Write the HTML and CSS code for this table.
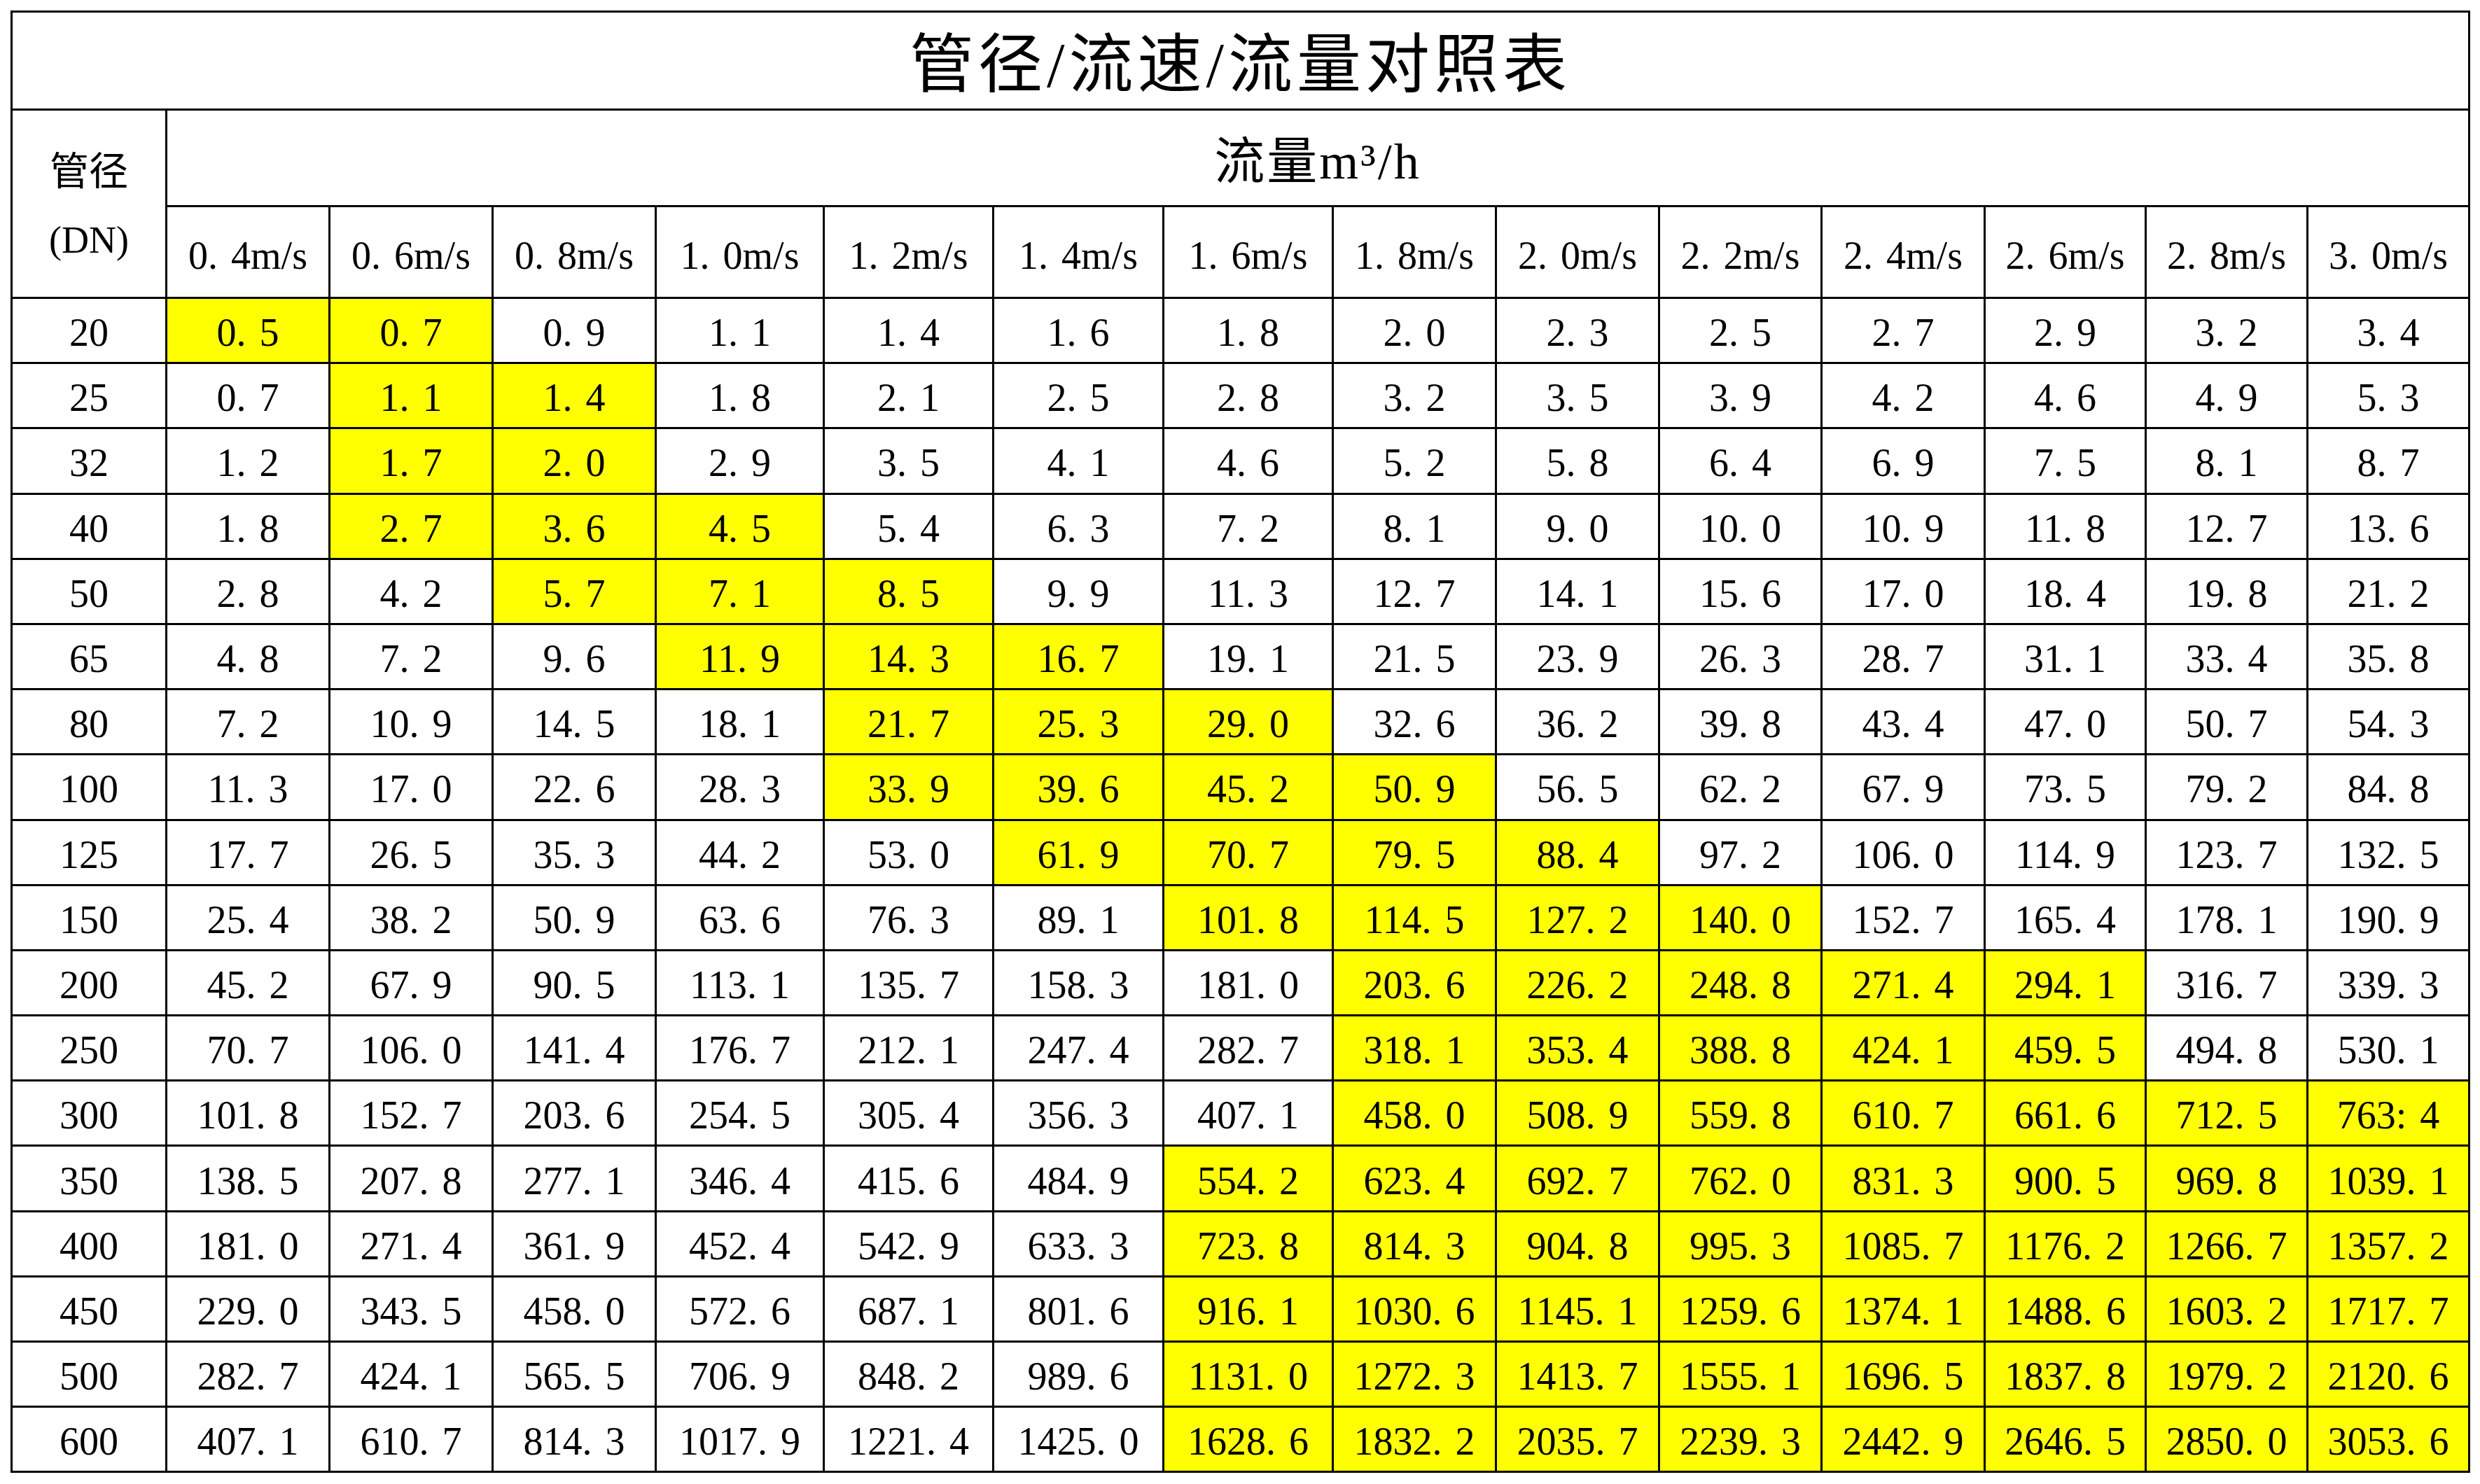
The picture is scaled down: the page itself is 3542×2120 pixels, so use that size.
FILE: index.html
```html
<!DOCTYPE html>
<html lang="zh-CN">
<head>
<meta charset="utf-8">
<title>管径/流速/流量对照表</title>
<link rel="stylesheet" href="styles.css">
</head>
<body>
<table class="chart">
<colgroup>
<col><col><col><col><col><col><col><col><col><col><col><col><col><col><col>
</colgroup>
<tr class="r-title"><th colspan="15" class="title">管径/流速/流量对照表</th></tr>
<tr class="r-unit"><th rowspan="2" class="dn"><span class="dn-a">管径</span><br><span class="dn-b">(DN)</span></th><th colspan="14" class="unit">流量m³/h</th></tr>
<tr class="r-speed">
<th>0<span class="p">.</span>4m/s</th><th>0<span class="p">.</span>6m/s</th><th>0<span class="p">.</span>8m/s</th><th>1<span class="p">.</span>0m/s</th><th>1<span class="p">.</span>2m/s</th><th>1<span class="p">.</span>4m/s</th><th>1<span class="p">.</span>6m/s</th><th>1<span class="p">.</span>8m/s</th><th>2<span class="p">.</span>0m/s</th><th>2<span class="p">.</span>2m/s</th><th>2<span class="p">.</span>4m/s</th><th>2<span class="p">.</span>6m/s</th><th>2<span class="p">.</span>8m/s</th><th>3<span class="p">.</span>0m/s</th>
</tr>
<tr class="r-data"><th>20</th><td class="y">0<span class="p">.</span>5</td><td class="y">0<span class="p">.</span>7</td><td>0<span class="p">.</span>9</td><td>1<span class="p">.</span>1</td><td>1<span class="p">.</span>4</td><td>1<span class="p">.</span>6</td><td>1<span class="p">.</span>8</td><td>2<span class="p">.</span>0</td><td>2<span class="p">.</span>3</td><td>2<span class="p">.</span>5</td><td>2<span class="p">.</span>7</td><td>2<span class="p">.</span>9</td><td>3<span class="p">.</span>2</td><td>3<span class="p">.</span>4</td></tr>
<tr class="r-data"><th>25</th><td>0<span class="p">.</span>7</td><td class="y">1<span class="p">.</span>1</td><td class="y">1<span class="p">.</span>4</td><td>1<span class="p">.</span>8</td><td>2<span class="p">.</span>1</td><td>2<span class="p">.</span>5</td><td>2<span class="p">.</span>8</td><td>3<span class="p">.</span>2</td><td>3<span class="p">.</span>5</td><td>3<span class="p">.</span>9</td><td>4<span class="p">.</span>2</td><td>4<span class="p">.</span>6</td><td>4<span class="p">.</span>9</td><td>5<span class="p">.</span>3</td></tr>
<tr class="r-data"><th>32</th><td>1<span class="p">.</span>2</td><td class="y">1<span class="p">.</span>7</td><td class="y">2<span class="p">.</span>0</td><td>2<span class="p">.</span>9</td><td>3<span class="p">.</span>5</td><td>4<span class="p">.</span>1</td><td>4<span class="p">.</span>6</td><td>5<span class="p">.</span>2</td><td>5<span class="p">.</span>8</td><td>6<span class="p">.</span>4</td><td>6<span class="p">.</span>9</td><td>7<span class="p">.</span>5</td><td>8<span class="p">.</span>1</td><td>8<span class="p">.</span>7</td></tr>
<tr class="r-data"><th>40</th><td>1<span class="p">.</span>8</td><td class="y">2<span class="p">.</span>7</td><td class="y">3<span class="p">.</span>6</td><td class="y">4<span class="p">.</span>5</td><td>5<span class="p">.</span>4</td><td>6<span class="p">.</span>3</td><td>7<span class="p">.</span>2</td><td>8<span class="p">.</span>1</td><td>9<span class="p">.</span>0</td><td>10<span class="p">.</span>0</td><td>10<span class="p">.</span>9</td><td>11<span class="p">.</span>8</td><td>12<span class="p">.</span>7</td><td>13<span class="p">.</span>6</td></tr>
<tr class="r-data"><th>50</th><td>2<span class="p">.</span>8</td><td>4<span class="p">.</span>2</td><td class="y">5<span class="p">.</span>7</td><td class="y">7<span class="p">.</span>1</td><td class="y">8<span class="p">.</span>5</td><td>9<span class="p">.</span>9</td><td>11<span class="p">.</span>3</td><td>12<span class="p">.</span>7</td><td>14<span class="p">.</span>1</td><td>15<span class="p">.</span>6</td><td>17<span class="p">.</span>0</td><td>18<span class="p">.</span>4</td><td>19<span class="p">.</span>8</td><td>21<span class="p">.</span>2</td></tr>
<tr class="r-data"><th>65</th><td>4<span class="p">.</span>8</td><td>7<span class="p">.</span>2</td><td>9<span class="p">.</span>6</td><td class="y">11<span class="p">.</span>9</td><td class="y">14<span class="p">.</span>3</td><td class="y">16<span class="p">.</span>7</td><td>19<span class="p">.</span>1</td><td>21<span class="p">.</span>5</td><td>23<span class="p">.</span>9</td><td>26<span class="p">.</span>3</td><td>28<span class="p">.</span>7</td><td>31<span class="p">.</span>1</td><td>33<span class="p">.</span>4</td><td>35<span class="p">.</span>8</td></tr>
<tr class="r-data"><th>80</th><td>7<span class="p">.</span>2</td><td>10<span class="p">.</span>9</td><td>14<span class="p">.</span>5</td><td>18<span class="p">.</span>1</td><td class="y">21<span class="p">.</span>7</td><td class="y">25<span class="p">.</span>3</td><td class="y">29<span class="p">.</span>0</td><td>32<span class="p">.</span>6</td><td>36<span class="p">.</span>2</td><td>39<span class="p">.</span>8</td><td>43<span class="p">.</span>4</td><td>47<span class="p">.</span>0</td><td>50<span class="p">.</span>7</td><td>54<span class="p">.</span>3</td></tr>
<tr class="r-data"><th>100</th><td>11<span class="p">.</span>3</td><td>17<span class="p">.</span>0</td><td>22<span class="p">.</span>6</td><td>28<span class="p">.</span>3</td><td class="y">33<span class="p">.</span>9</td><td class="y">39<span class="p">.</span>6</td><td class="y">45<span class="p">.</span>2</td><td class="y">50<span class="p">.</span>9</td><td>56<span class="p">.</span>5</td><td>62<span class="p">.</span>2</td><td>67<span class="p">.</span>9</td><td>73<span class="p">.</span>5</td><td>79<span class="p">.</span>2</td><td>84<span class="p">.</span>8</td></tr>
<tr class="r-data"><th>125</th><td>17<span class="p">.</span>7</td><td>26<span class="p">.</span>5</td><td>35<span class="p">.</span>3</td><td>44<span class="p">.</span>2</td><td>53<span class="p">.</span>0</td><td class="y">61<span class="p">.</span>9</td><td class="y">70<span class="p">.</span>7</td><td class="y">79<span class="p">.</span>5</td><td class="y">88<span class="p">.</span>4</td><td>97<span class="p">.</span>2</td><td>106<span class="p">.</span>0</td><td>114<span class="p">.</span>9</td><td>123<span class="p">.</span>7</td><td>132<span class="p">.</span>5</td></tr>
<tr class="r-data"><th>150</th><td>25<span class="p">.</span>4</td><td>38<span class="p">.</span>2</td><td>50<span class="p">.</span>9</td><td>63<span class="p">.</span>6</td><td>76<span class="p">.</span>3</td><td>89<span class="p">.</span>1</td><td class="y">101<span class="p">.</span>8</td><td class="y">114<span class="p">.</span>5</td><td class="y">127<span class="p">.</span>2</td><td class="y">140<span class="p">.</span>0</td><td>152<span class="p">.</span>7</td><td>165<span class="p">.</span>4</td><td>178<span class="p">.</span>1</td><td>190<span class="p">.</span>9</td></tr>
<tr class="r-data"><th>200</th><td>45<span class="p">.</span>2</td><td>67<span class="p">.</span>9</td><td>90<span class="p">.</span>5</td><td>113<span class="p">.</span>1</td><td>135<span class="p">.</span>7</td><td>158<span class="p">.</span>3</td><td>181<span class="p">.</span>0</td><td class="y">203<span class="p">.</span>6</td><td class="y">226<span class="p">.</span>2</td><td class="y">248<span class="p">.</span>8</td><td class="y">271<span class="p">.</span>4</td><td class="y">294<span class="p">.</span>1</td><td>316<span class="p">.</span>7</td><td>339<span class="p">.</span>3</td></tr>
<tr class="r-data"><th>250</th><td>70<span class="p">.</span>7</td><td>106<span class="p">.</span>0</td><td>141<span class="p">.</span>4</td><td>176<span class="p">.</span>7</td><td>212<span class="p">.</span>1</td><td>247<span class="p">.</span>4</td><td>282<span class="p">.</span>7</td><td class="y">318<span class="p">.</span>1</td><td class="y">353<span class="p">.</span>4</td><td class="y">388<span class="p">.</span>8</td><td class="y">424<span class="p">.</span>1</td><td class="y">459<span class="p">.</span>5</td><td>494<span class="p">.</span>8</td><td>530<span class="p">.</span>1</td></tr>
<tr class="r-data"><th>300</th><td>101<span class="p">.</span>8</td><td>152<span class="p">.</span>7</td><td>203<span class="p">.</span>6</td><td>254<span class="p">.</span>5</td><td>305<span class="p">.</span>4</td><td>356<span class="p">.</span>3</td><td>407<span class="p">.</span>1</td><td class="y">458<span class="p">.</span>0</td><td class="y">508<span class="p">.</span>9</td><td class="y">559<span class="p">.</span>8</td><td class="y">610<span class="p">.</span>7</td><td class="y">661<span class="p">.</span>6</td><td class="y">712<span class="p">.</span>5</td><td class="y">763<span class="p">:</span>4</td></tr>
<tr class="r-data"><th>350</th><td>138<span class="p">.</span>5</td><td>207<span class="p">.</span>8</td><td>277<span class="p">.</span>1</td><td>346<span class="p">.</span>4</td><td>415<span class="p">.</span>6</td><td>484<span class="p">.</span>9</td><td class="y">554<span class="p">.</span>2</td><td class="y">623<span class="p">.</span>4</td><td class="y">692<span class="p">.</span>7</td><td class="y">762<span class="p">.</span>0</td><td class="y">831<span class="p">.</span>3</td><td class="y">900<span class="p">.</span>5</td><td class="y">969<span class="p">.</span>8</td><td class="y">1039<span class="p">.</span>1</td></tr>
<tr class="r-data"><th>400</th><td>181<span class="p">.</span>0</td><td>271<span class="p">.</span>4</td><td>361<span class="p">.</span>9</td><td>452<span class="p">.</span>4</td><td>542<span class="p">.</span>9</td><td>633<span class="p">.</span>3</td><td class="y">723<span class="p">.</span>8</td><td class="y">814<span class="p">.</span>3</td><td class="y">904<span class="p">.</span>8</td><td class="y">995<span class="p">.</span>3</td><td class="y">1085<span class="p">.</span>7</td><td class="y">1176<span class="p">.</span>2</td><td class="y">1266<span class="p">.</span>7</td><td class="y">1357<span class="p">.</span>2</td></tr>
<tr class="r-data"><th>450</th><td>229<span class="p">.</span>0</td><td>343<span class="p">.</span>5</td><td>458<span class="p">.</span>0</td><td>572<span class="p">.</span>6</td><td>687<span class="p">.</span>1</td><td>801<span class="p">.</span>6</td><td class="y">916<span class="p">.</span>1</td><td class="y">1030<span class="p">.</span>6</td><td class="y">1145<span class="p">.</span>1</td><td class="y">1259<span class="p">.</span>6</td><td class="y">1374<span class="p">.</span>1</td><td class="y">1488<span class="p">.</span>6</td><td class="y">1603<span class="p">.</span>2</td><td class="y">1717<span class="p">.</span>7</td></tr>
<tr class="r-data"><th>500</th><td>282<span class="p">.</span>7</td><td>424<span class="p">.</span>1</td><td>565<span class="p">.</span>5</td><td>706<span class="p">.</span>9</td><td>848<span class="p">.</span>2</td><td>989<span class="p">.</span>6</td><td class="y">1131<span class="p">.</span>0</td><td class="y">1272<span class="p">.</span>3</td><td class="y">1413<span class="p">.</span>7</td><td class="y">1555<span class="p">.</span>1</td><td class="y">1696<span class="p">.</span>5</td><td class="y">1837<span class="p">.</span>8</td><td class="y">1979<span class="p">.</span>2</td><td class="y">2120<span class="p">.</span>6</td></tr>
<tr class="r-data"><th>600</th><td>407<span class="p">.</span>1</td><td>610<span class="p">.</span>7</td><td>814<span class="p">.</span>3</td><td>1017<span class="p">.</span>9</td><td>1221<span class="p">.</span>4</td><td>1425<span class="p">.</span>0</td><td class="y">1628<span class="p">.</span>6</td><td class="y">1832<span class="p">.</span>2</td><td class="y">2035<span class="p">.</span>7</td><td class="y">2239<span class="p">.</span>3</td><td class="y">2442<span class="p">.</span>9</td><td class="y">2646<span class="p">.</span>5</td><td class="y">2850<span class="p">.</span>0</td><td class="y">3053<span class="p">.</span>6</td></tr>
</table>
</body>
</html>
```

FILE: styles.css
```css
html, body {
  margin: 0;
  padding: 0;
  background: #ffffff;
}

body {
  padding: 15px 0 0 15px;
  font-family: "Liberation Serif", "Noto Sans CJK SC", serif;
  color: #000000;
}

.chart {
  border-collapse: collapse;
  table-layout: fixed;
  width: 3512px;
}

.chart col:nth-child(1) { width: 221px; }
.chart col:nth-child(2) { width: 233px; }
.chart col:nth-child(3) { width: 233px; }
.chart col:nth-child(4) { width: 233px; }
.chart col:nth-child(5) { width: 240px; }
.chart col:nth-child(6) { width: 242px; }
.chart col:nth-child(7) { width: 243px; }
.chart col:nth-child(8) { width: 242px; }
.chart col:nth-child(9) { width: 233px; }
.chart col:nth-child(10) { width: 233px; }
.chart col:nth-child(11) { width: 232px; }
.chart col:nth-child(12) { width: 233px; }
.chart col:nth-child(13) { width: 230px; }
.chart col:nth-child(14) { width: 231px; }
.chart col:nth-child(15) { width: 231px; }

.chart th,
.chart td {
  border: 3px solid #000000;
  padding: 0;
  text-align: center;
  vertical-align: middle;
  font-weight: normal;
  font-size: 56px;
  line-height: 1;
  white-space: nowrap;
}

.r-title { height: 140px; }
.r-unit { height: 138px; }
.r-speed { height: 131px; }
.r-data { height: 93.2px; }

.chart .title {
  font-size: 92px;
  letter-spacing: 6px;
  padding-top: 12px;
}

.chart .unit {
  font-size: 72px;
  letter-spacing: 3px;
  padding-top: 10px;
}

.chart .dn {
  line-height: 97px;
  padding-top: 6px;
}

.dn-a {
  font-size: 56px;
}

.dn-b {
  font-size: 54px;
}

.chart .r-speed th {
  padding-top: 10px;
}

.chart .r-data th,
.chart .r-data td {
  padding-top: 6px;
}

.p {
  margin-right: 19px;
}

.y {
  background: #ffff00;
}
```
